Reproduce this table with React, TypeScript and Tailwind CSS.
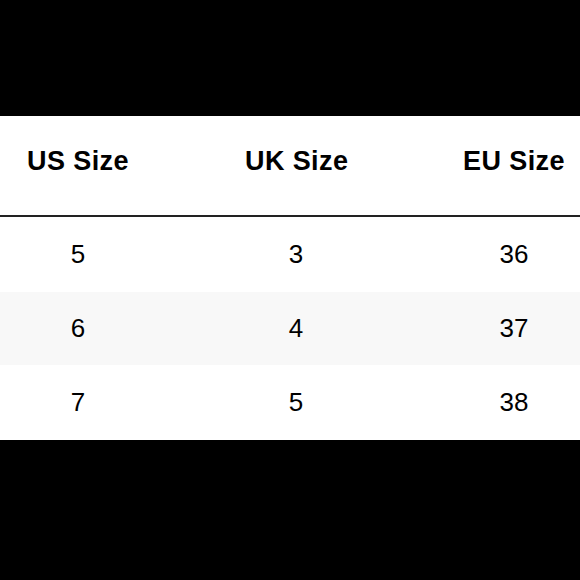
const rows = [
  ['5', '3', '36'],
  ['6', '4', '37'],
  ['7', '5', '38'],
];

const headers = ['US Size', 'UK Size', 'EU Size'];

export default function App() {
  return (
    <div
      className="flex h-[580px] w-[580px] flex-col bg-black"
      style={{ fontFamily: '"Liberation Sans", Arial, sans-serif' }}
    >
      <div className="h-[116px]" />
      <div className="flex flex-col bg-white text-black">
        <div className="flex h-[101px] items-center justify-between border-b-2 border-[#222] pb-[8px] pl-[27px] pr-[15px]">
          {headers.map((h) => (
            <div key={h} className="w-[102px] whitespace-nowrap text-center text-[27px] font-bold tracking-[0.4px]">
              {h}
            </div>
          ))}
        </div>
        {rows.map((r, i) => (
          <div
            key={i}
            className={`flex items-center justify-between pl-[27px] pr-[15px] ${
              i === 1 ? 'h-[73px] bg-[#f8f8f8]' : 'h-[75px] bg-white'
            }`}
          >
            {r.map((c, j) => (
              <div key={j} className="w-[102px] text-center text-[26px]">
                {c}
              </div>
            ))}
          </div>
        ))}
      </div>
    </div>
  );
}
